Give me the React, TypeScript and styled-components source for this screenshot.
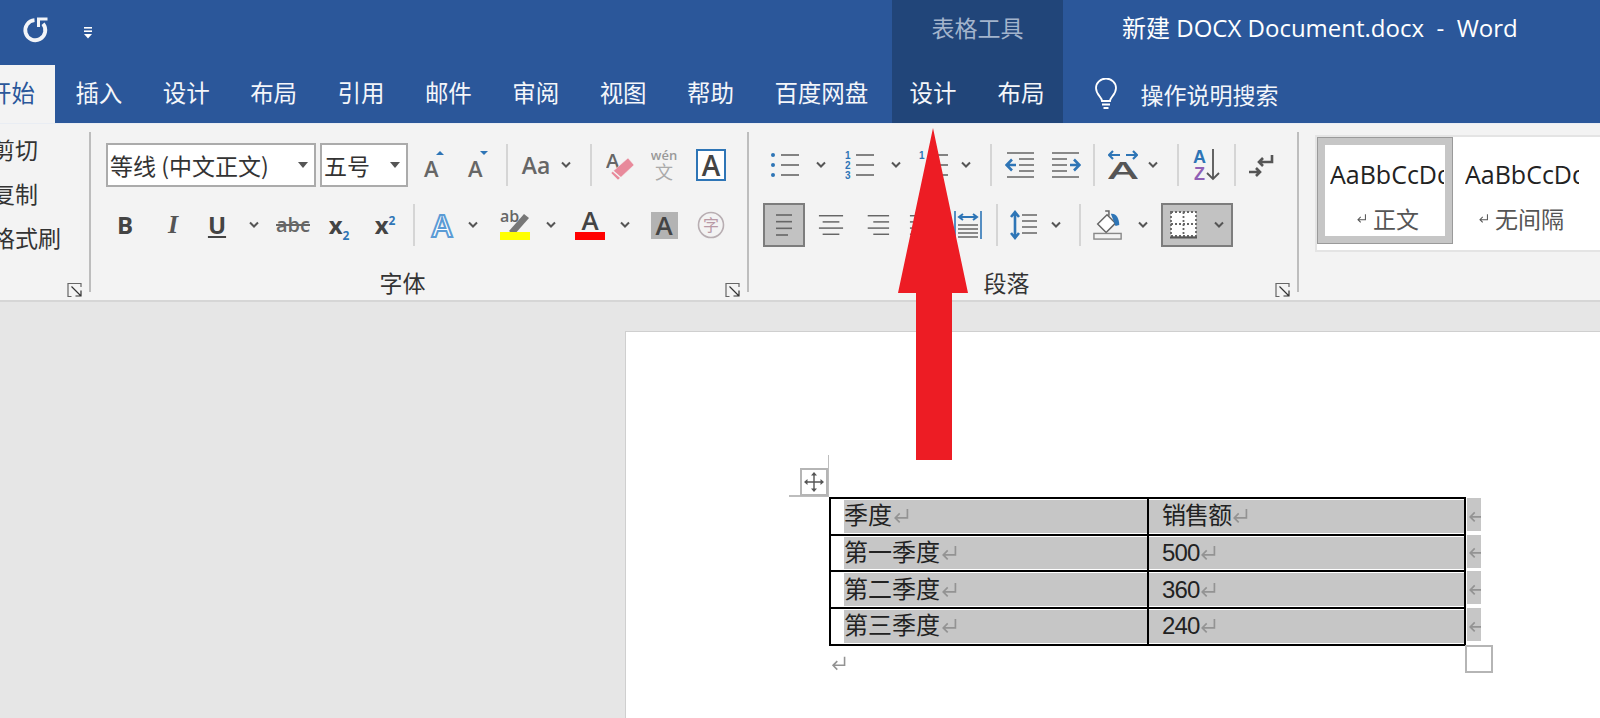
import styled, { createGlobalStyle } from 'styled-components';
import type { ReactNode } from 'react';

const CJK = '"Noto Sans CJK SC", "Open Sans", sans-serif';
const BLUE = '#2b579a';
const DARK = '#444';
const ICON_BLUE = '#2e75b6';

const GlobalStyle = createGlobalStyle`
  html, body {
    margin: 0;
    padding: 0;
    background: #e6e6e6;
    font-family: ${CJK};
  }
`;

const Window = styled.div`
  position: relative;
  width: 1600px;
  height: 718px;
  overflow: hidden;
  display: flex;
  flex-direction: column;
`;

const TitleBar = styled.div`
  height: 65px;
  flex: none;
  display: flex;
  background: ${BLUE};
  color: #fff;
`;

const QuickAccess = styled.div`
  width: 892px;
  display: flex;
  align-items: center;
  padding-left: 21px;
  gap: 34px;
  box-sizing: border-box;
`;

const UndoButton = styled.div`
  height: 28px;
  margin-bottom: 5px;
`;

const ContextTitle = styled.div`
  width: 171px;
  background: #214579;
  color: #a3b4cc;
  font-size: 23px;
  display: flex;
  align-items: center;
  justify-content: center;
  padding-bottom: 12px;
  box-sizing: border-box;
`;

const DocTitle = styled.div`
  margin-left: 59px;
  padding-bottom: 12px;
  font-size: 24px;
  font-family: "Open Sans", ${CJK};
  display: flex;
  align-items: center;
  white-space: pre;
`;

const TabBar = styled.div`
  height: 58px;
  flex: none;
  display: flex;
  background: ${BLUE};
  color: #f4f6fa;
`;

const Tab = styled.div<{ $active?: boolean }>`
  display: flex;
  align-items: center;
  padding: 0 20.2px 4px;
  font-size: 23.5px;
  white-space: nowrap;
  ${(p) => p.$active && `
    margin-left: -12px;
    padding-left: 0;
    background: #f3f3f3;
    color: ${BLUE};
  `}
`;

const ContextTabs = styled.div`
  display: flex;
  width: 171px;
  box-sizing: border-box;
  margin-left: 3px;
  padding-left: 18px;
  gap: 41px;
  background: #214579;
`;

const ContextTab = styled(Tab)`
  padding: 0 0 4px;
`;

const SearchHint = styled.div`
  display: flex;
  align-items: center;
  gap: 23px;
  margin-left: 31px;
  font-size: 23px;
  padding-bottom: 1px;
`;

const Ribbon = styled.div`
  height: 176px;
  flex: none;
  display: flex;
  background: #f3f3f3;
  border-top: 1px solid #e9edf3;
  border-bottom: 2px solid #d6d6d6;
  overflow: hidden;
`;

const Group = styled.div<{ $w: number }>`
  width: ${(p) => p.$w}px;
  flex: none;
  display: flex;
  flex-direction: column;
`;

const Divider = styled.div`
  width: 2px;
  flex: none;
  margin: 8px 0 8px;
  background: #bdbdbd;
`;

const ClipList = styled.div`
  margin: 3px 0 0 -8px;
  font-size: 23px;
  color: #333;
  line-height: 44px;
  white-space: nowrap;
`;

const Rows = styled.div<{ $left?: number }>`
  display: flex;
  flex-direction: column;
  gap: 16px;
  padding: 19px 0 0 ${(p) => p.$left ?? 0}px;
`;

const Row = styled.div`
  height: 44px;
  display: flex;
  align-items: center;
`;

const Footer = styled.div`
  margin-top: auto;
  height: 30px;
  margin-bottom: 5px;
  display: grid;
  grid-template-columns: 1fr auto 1fr;
  align-items: center;
  padding-right: 33px;
  position: relative;
  font-size: 23px;
  color: #333;
`;

const GroupLabel = styled.div`
  grid-column: 2;
`;

const Launcher = styled.div`
  position: absolute;
  right: 6px;
  top: 6px;
  width: 16px;
  height: 16px;
`;

const Select = styled.div<{ $w: number; $ml?: number }>`
  width: ${(p) => p.$w}px;
  height: 44px;
  margin-left: ${(p) => p.$ml ?? 0}px;
  box-sizing: border-box;
  border: 2px solid #ababab;
  background: #fff;
  display: flex;
  align-items: center;
  justify-content: space-between;
  padding: 0 6px 0 2px;
  font-size: 23px;
  color: #333;
  white-space: nowrap;
  &::after {
    content: '';
    border: 5px solid transparent;
    border-top: 6px solid #555;
    border-bottom: none;
  }
`;

const Tool = styled.div<{ $w: number; $ml: number }>`
  width: ${(p) => p.$w}px;
  margin-left: ${(p) => p.$ml}px;
  flex: none;
  display: flex;
  align-items: center;
  justify-content: center;
  color: ${DARK};
`;

const ToolSep = styled.div<{ $ml: number }>`
  width: 2px;
  height: 42px;
  flex: none;
  margin-left: ${(p) => p.$ml}px;
  background: #d5d5d5;
`;

const ActiveTool = styled.div<{ $w: number; $ml: number }>`
  width: ${(p) => p.$w}px;
  height: 44px;
  margin-left: ${(p) => p.$ml}px;
  flex: none;
  box-sizing: border-box;
  border: 2px solid #7d7d7d;
  background: #c2c2c2;
  display: flex;
  align-items: center;
  justify-content: center;
  gap: 16px;
`;

const Letter = styled.span<{ $size?: number; $italic?: boolean; $weight?: number; $color?: string }>`
  font-family: ${(p) => (p.$italic ? '"Liberation Serif"' : '"Open Sans"')}, sans-serif;
  font-size: ${(p) => p.$size ?? 24}px;
  font-weight: ${(p) => p.$weight ?? 400};
  font-style: ${(p) => (p.$italic ? 'italic' : 'normal')};
  color: ${(p) => p.$color ?? DARK};
  line-height: 1;
`;

const Gallery = styled.div`
  margin: 11px 0 0 16px;
  height: 113px;
  display: flex;
  background: #fff;
  flex: 1;
  border-top: 2px solid #e4e4e4;
  border-left: 2px solid #e4e4e4;
  border-bottom: 2px solid #e4e4e4;
`;

const StyleCell = styled.div<{ $selected?: boolean }>`
  width: 136px;
  height: 107px;
  flex: none;
  box-sizing: border-box;
  background: #fff;
  padding: 8px 0 0 ${(p) => (p.$selected ? 5 : 0)}px;
  border: ${(p) => (p.$selected ? '8px solid #c6c6c6' : 'none')};
  outline: ${(p) => (p.$selected ? '1px solid #9a9a9a' : 'none')};
  outline-offset: -1px;
  display: flex;
  flex-direction: column;
`;

const StyleSample = styled.div<{ $selected?: boolean }>`
  width: 114px;
  margin-left: ${(p) => (p.$selected ? 0 : 12)}px;
  margin-top: ${(p) => (p.$selected ? 1 : 9)}px;
  overflow: hidden;
  white-space: nowrap;
  font-family: "Open Sans", sans-serif;
  font-size: 25px;
  line-height: 40px;
  color: #222;
`;

const StyleName = styled.div`
  margin-top: 8px;
  display: flex;
  align-items: center;
  justify-content: center;
  gap: 6px;
  font-size: 23px;
  line-height: 32px;
  color: #555;
`;

const Canvas = styled.div`
  flex: 1;
  min-height: 0;
  padding: 29px 0 0 625px;
  background: #e6e6e6;
`;

const Page = styled.div`
  height: 100%;
  background: #fff;
  padding: 165px 0 0 203px;
  box-sizing: border-box;
  border-left: 1px solid #cfcfcf;
  border-top: 1px solid #cfcfcf;
`;

const TableWrap = styled.div`
  position: relative;
  width: 660px;
  display: flex;
`;

const SheetTable = styled.table`
  width: 635px;
  flex: none;
  border-collapse: collapse;
  table-layout: fixed;
  font-size: 24px;
  color: #222;
  td {
    height: 36.7px;
    padding: 0;
    border: 2px solid #000;
    box-sizing: border-box;
  }
`;

const Shade = styled.div<{ $inset?: boolean }>`
  height: 32.7px;
  margin: 1px 0 1px ${(p) => (p.$inset ? 13 : 0)}px;
  padding-left: ${(p) => (p.$inset ? 0 : 13)}px;
  background: #c6c6c6;
  display: flex;
  align-items: center;
  font-family: "Liberation Sans", ${CJK};
  letter-spacing: ${(p) => (p.$inset ? 0 : -0.9)}px;
  line-height: 32px;
`;

const RowEnds = styled.div`
  display: flex;
  flex-direction: column;
  padding-top: 1px;
  margin-left: 1px;
`;

const RowEnd = styled.div`
  width: 14px;
  height: 33px;
  margin-bottom: 3.7px;
  background: #c6c6c6;
  display: flex;
  align-items: center;
  overflow: hidden;
`;

const MoveHandle = styled.div`
  position: absolute;
  left: -29px;
  top: -29px;
  width: 28px;
  height: 28px;
  box-sizing: border-box;
  border: 2px solid #b5b5b5;
  background: #fff;
  display: flex;
  align-items: center;
  justify-content: center;
`;

const GuideV = styled.div`
  position: absolute;
  left: -1px;
  top: -42px;
  width: 1px;
  height: 42px;
  background: #bdbdbd;
`;

const GuideH = styled.div`
  position: absolute;
  left: -40px;
  top: -2px;
  width: 40px;
  height: 2px;
  background: #bdbdbd;
`;

const ResizeHandle = styled.div`
  position: absolute;
  left: 636px;
  top: 148px;
  width: 28px;
  height: 28px;
  box-sizing: border-box;
  border: 2px solid #b5b5b5;
  background: #fff;
`;

const AfterTable = styled.div`
  padding: 7px 0 0 1px;
`;

const Arrow = styled.svg`
  position: absolute;
  left: 898px;
  top: 128px;
`;

const Chevron = () => (
  <svg width="12" height="8" viewBox="0 0 12 8" fill="none" stroke="#555" strokeWidth="2">
    <path d="M2 1.5l4 4 4-4" />
  </svg>
);

const ReturnMark = ({ size = 18, color = '#939393' }: { size?: number; color?: string }) => (
  <svg width={size} height={size} viewBox="0 0 14 14" fill="none" stroke={color} strokeWidth="1.3" style={{ flex: 'none' }}>
    <path d="M12 1.5v7H2.5M6 5L2.5 8.5 6 12" />
  </svg>
);

const UndoIcon = () => (
  <svg width="28" height="28" viewBox="0 0 28 28" fill="none" stroke="#f2f4f8" strokeWidth="3.8">
    <path d="M13.5 4.2a10 10 0 1 0 8.5 3.6" />
    <path d="M26.5 3H17.5v8" strokeWidth="3" />
  </svg>
);

const CustomizeIcon = () => (
  <svg width="10" height="12" viewBox="0 0 10 12" fill="#fff">
    <rect x="1" y="0" width="8" height="1.6" />
    <rect x="1" y="3.4" width="8" height="1.6" />
    <path d="M1 7h8l-4 4.5z" />
  </svg>
);

const BulbIcon = () => (
  <svg width="24" height="32" viewBox="0 0 24 32" fill="none" stroke="#fff" strokeWidth="1.8">
    <path d="M8 23c0-4-6-6-6-13a10 9.5 0 0 1 20 0c0 7-6 9-6 13z" />
    <path d="M8 26.5h8M9.5 30h5" />
  </svg>
);

const LauncherIcon = () => (
  <svg width="16" height="16" viewBox="0 0 16 16" fill="none" stroke="#666" strokeWidth="1.2">
    <path d="M14.5 5V1.5h-13v13H5" transform="translate(-0.5 0)" />
    <path d="M4.5 4.5l9 9M14 8.5v5.5H8.5" stroke="#333" />
  </svg>
);

const TextLines = ({ xs }: { xs: [number, number][] }) => (
  <svg width="28" height="26" viewBox="0 0 28 26" stroke="#666" strokeWidth="1.6">
    {xs.map(([a, b], i) => (
      <line key={i} x1={a} x2={b} y1={3 + (i * 20) / (xs.length - 1)} y2={3 + (i * 20) / (xs.length - 1)} />
    ))}
  </svg>
);

const ListIcon = ({ marks }: { marks: string[] }) => (
  <svg width="30" height="30" viewBox="0 0 30 30" stroke="#666" strokeWidth="1.6">
    {[5, 15, 25].map((y, i) => (
      <g key={y}>
        <line x1="11" x2="29" y1={y} y2={y} />
        {marks[i] === '•' ? (
          <circle cx="3" cy={y} r="2" fill={ICON_BLUE} stroke="none" />
        ) : (
          <text x="0" y={y + 4} fontSize="10" fontWeight="700" fontFamily="Liberation Sans" fill={ICON_BLUE} stroke="none">
            {marks[i]}
          </text>
        )}
      </g>
    ))}
  </svg>
);

const IndentIcon = ({ flip }: { flip?: boolean }) => (
  <svg width="30" height="28" viewBox="0 0 30 28" fill="none" stroke="#666" strokeWidth="1.6" style={flip ? { transform: 'scaleX(-1)' } : undefined}>
    <path d="M2 2h27M14 8h15M14 14h15M14 20h15M2 26h27" />
    <path d="M11 14H2M7 8.5L1.5 14 7 19.5" stroke={ICON_BLUE} strokeWidth="2.6" />
  </svg>
);

const AsianLayoutIcon = () => (
  <svg width="30" height="30" viewBox="0 0 30 30" fill="none">
    <path d="M1 5h11M5 1L1 5l4 4M29 5H18M25 1l4 4-4 4" stroke={ICON_BLUE} strokeWidth="2.2" />
    <text x="0" y="29" textLength="30" lengthAdjust="spacingAndGlyphs" fontSize="23" fontWeight="600" fontFamily="Open Sans" fill="#555">A</text>
  </svg>
);

const SortIcon = () => (
  <svg width="28" height="34" viewBox="0 0 28 34" fill="none">
    <text x="0" y="15" fontSize="18" fontWeight="700" fontFamily="Liberation Sans" fill={ICON_BLUE}>A</text>
    <text x="1" y="32" fontSize="18" fontWeight="700" fontFamily="Liberation Sans" fill="#8f5fb5">Z</text>
    <path d="M20 1v30M14 25l6 6 6-6" stroke="#555" strokeWidth="1.8" />
  </svg>
);

const MarksIcon = () => (
  <svg width="26" height="24" viewBox="0 0 26 24" fill="none" stroke="#555" strokeWidth="2.6">
    <path d="M24 2v7H11M15 5l-4 4 4 4" />
    <path d="M1 19h11M8 15l4 4-4 4" />
  </svg>
);

const DistributedIcon = () => (
  <svg width="28" height="30" viewBox="0 0 28 30" fill="none" stroke="#666" strokeWidth="1.6">
    <path d="M1 1v28M27 1v28" stroke={ICON_BLUE} />
    <path d="M6 7h16M9 4L5 7l4 3M19 4l4 3-4 3" stroke={ICON_BLUE} strokeWidth="2" />
    <path d="M4 15h20M4 19h20M4 23h20M4 27h20" />
  </svg>
);

const LineSpacingIcon = () => (
  <svg width="28" height="32" viewBox="0 0 28 32" fill="none">
    <path d="M5 3v26M1 8l4-5 4 5M1 24l4 5 4-5" stroke={ICON_BLUE} strokeWidth="2.6" />
    <path d="M12 6h15M12 12h15M12 18h15M12 24h15" stroke="#666" strokeWidth="1.6" />
  </svg>
);

const ShadingIcon = () => (
  <svg width="32" height="34" viewBox="0 0 32 34" fill="none">
    <path d="M13 2h4v5" stroke="#666" strokeWidth="1.6" />
    <path d="M15 6L5 16l9 9 10-10z" fill="#fff" stroke="#666" strokeWidth="1.6" />
    <path d="M19 5c5-1 9 4 9 12l-4 1z" fill={ICON_BLUE} />
    <rect x="1" y="26" width="29" height="6" fill="#f3f3f3" stroke="#888" strokeWidth="1.5" />
  </svg>
);

const BordersIcon = () => (
  <svg width="27" height="28" viewBox="0 0 27 28" fill="none" stroke="#666" strokeWidth="1.8" strokeDasharray="2 2">
    <rect x="1" y="1" width="25" height="24" fill="#fff" />
    <path d="M13.5 1v24M1 13h25" />
    <path d="M0 26.5h27" stroke="#555" strokeWidth="2" strokeDasharray="none" />
  </svg>
);

const MoveIcon = () => (
  <svg width="20" height="20" viewBox="0 0 20 20" fill="#555" stroke="#555" strokeWidth="1.4">
    <path d="M10 2v16M2 10h16" fill="none" />
    <path d="M10 0l3 3.5H7zM10 20l-3-3.5h6zM0 10l3.5-3v6zM20 10l-3.5 3V7z" stroke="none" />
  </svg>
);

const GrowShrink = ({ up }: { up?: boolean }) => (
  <svg width="26" height="30" viewBox="0 0 26 30">
    <text x="3" y="27" fontSize="22" fontWeight="600" fontFamily="Open Sans" fill="#666">A</text>
    <path d={up ? 'M15 5l4-4 4 4z' : 'M15 1h8l-4 4z'} fill={ICON_BLUE} />
  </svg>
);

const ClearFormatIcon = () => (
  <svg width="30" height="32" viewBox="0 0 30 32">
    <text x="0" y="19" fontSize="20" fontFamily="Open Sans" fontWeight="600" fill="#666">A</text>
    <path d="M5 24L22 9l6 7L12 31z" fill="#e88a9b" stroke="#f3f3f3" strokeWidth="0.5" />
    <path d="M7 22l8 7" stroke="#f3f3f3" strokeWidth="1.5" />
  </svg>
);

const PhoneticIcon = () => (
  <svg width="26" height="32" viewBox="0 0 26 32">
    <text x="13" y="11" textAnchor="middle" fontSize="13" fontWeight="600" fontFamily="Open Sans" fill="#999">wén</text>
    <text x="13" y="30" textAnchor="middle" fontSize="18" fontFamily="Noto Sans CJK SC" fill="#aaa">文</text>
  </svg>
);

const BoxedA = styled.div`
  width: 30px;
  height: 32px;
  box-sizing: border-box;
  border: 2px solid ${ICON_BLUE};
  background: #fff;
  display: flex;
  align-items: center;
  justify-content: center;
`;

const TextEffectA = () => (
  <svg width="26" height="30" viewBox="0 0 26 30">
    <text x="13" y="27" textAnchor="middle" fontSize="31" fontFamily="Open Sans" fontWeight="600" fill="#fff" stroke="#5b9bd5" strokeWidth="2">A</text>
  </svg>
);

const HighlightIcon = () => (
  <svg width="30" height="32" viewBox="0 0 30 32">
    <text x="0" y="13" fontSize="16" fontWeight="600" fontFamily="Open Sans" fill="#666">ab</text>
    <path d="M9 22L24 5l5 4-15 17z" fill="#777" />
    <rect x="0" y="23" width="30" height="8" fill="#ffff00" />
  </svg>
);

const FontColorIcon = () => (
  <svg width="30" height="32" viewBox="0 0 30 32">
    <text x="15" y="21" textAnchor="middle" fontSize="26" fontWeight="600" fontFamily="Open Sans" fill={DARK}>A</text>
    <rect x="0" y="23" width="30" height="8" fill="#ff0000" />
  </svg>
);

const ShadedA = styled.div`
  width: 27px;
  height: 27px;
  background: #b3b3b3;
  display: flex;
  align-items: center;
  justify-content: center;
`;

const EnclosedIcon = () => (
  <svg width="28" height="28" viewBox="0 0 28 28">
    <circle cx="14" cy="14" r="12.5" fill="#f3f3f3" stroke="#b8aeb2" strokeWidth="1.6" />
    <text x="14" y="20" textAnchor="middle" fontSize="16" fontFamily="Noto Sans CJK SC" fill="#b99aa6">字</text>
  </svg>
);

const Sub = styled.sub`
  font-size: 12px;
  color: ${ICON_BLUE};
  line-height: 0;
`;

const Sup = styled.sup`
  font-size: 12px;
  color: ${ICON_BLUE};
  line-height: 0;
`;

const Struck = styled(Letter)`
  text-decoration: line-through;
`;

const Underlined = styled(Letter)`
  text-decoration: underline;
`;

const GroupFooter = ({ label, children }: { label?: string; children?: ReactNode }) => (
  <Footer>
    {label && <GroupLabel>{label}</GroupLabel>}
    {children}
    <Launcher>
      <LauncherIcon />
    </Launcher>
  </Footer>
);

const ribbonTabs = ['插入', '设计', '布局', '引用', '邮件', '审阅', '视图', '帮助', '百度网盘'];

const tableRows = [
  ['季度', '销售额'],
  ['第一季度', '500'],
  ['第二季度', '360'],
  ['第三季度', '240'],
];

const App = () => (
  <>
    <GlobalStyle />
    <Window>
      <TitleBar>
        <QuickAccess>
          <UndoButton><UndoIcon /></UndoButton>
          <CustomizeIcon />
        </QuickAccess>
        <ContextTitle>表格工具</ContextTitle>
        <DocTitle>新建 DOCX Document.docx  -  Word</DocTitle>
      </TitleBar>

      <TabBar>
        <Tab $active>开始</Tab>
        {ribbonTabs.map((t) => (
          <Tab key={t}>{t}</Tab>
        ))}
        <ContextTabs>
          <ContextTab>设计</ContextTab>
          <ContextTab>布局</ContextTab>
        </ContextTabs>
        <SearchHint>
          <BulbIcon />
          操作说明搜索
        </SearchHint>
      </TabBar>

      <Ribbon>
        <Group $w={89}>
          <ClipList>
            <div>剪切</div>
            <div>复制</div>
            <div>格式刷</div>
          </ClipList>
          <GroupFooter />
        </Group>
        <Divider />

        <Group $w={656}>
          <Rows $left={15}>
            <Row>
              <Select $w={210}>等线 (中文正文)</Select>
              <Select $w={88} $ml={4}>五号</Select>
              <Tool $w={26} $ml={13}><GrowShrink up /></Tool>
              <Tool $w={26} $ml={18}><GrowShrink /></Tool>
              <ToolSep $ml={15} />
              <Tool $w={28} $ml={14}><Letter $size={23} $weight={600} $color="#666">Aa</Letter></Tool>
              <Tool $w={12} $ml={10}><Chevron /></Tool>
              <ToolSep $ml={18} />
              <Tool $w={30} $ml={14}><ClearFormatIcon /></Tool>
              <Tool $w={26} $ml={15}><PhoneticIcon /></Tool>
              <Tool $w={30} $ml={19}><BoxedA><Letter $size={28} $weight={600}>A</Letter></BoxedA></Tool>
            </Row>
            <Row>
              <Tool $w={22} $ml={8}><Letter $weight={700}>B</Letter></Tool>
              <Tool $w={18} $ml={28}><Letter $weight={700} $italic $size={26} $color="#555">I</Letter></Tool>
              <Tool $w={24} $ml={23}><Underlined $weight={700}>U</Underlined></Tool>
              <Tool $w={12} $ml={19}><Chevron /></Tool>
              <Tool $w={34} $ml={16}><Struck $size={20} $weight={600} $color="#666">abc</Struck></Tool>
              <Tool $w={32} $ml={13}><Letter $weight={700}>x<Sub>2</Sub></Letter></Tool>
              <Tool $w={32} $ml={14}><Letter $weight={700}>x<Sup>2</Sup></Letter></Tool>
              <ToolSep $ml={12} />
              <Tool $w={26} $ml={14}><TextEffectA /></Tool>
              <Tool $w={12} $ml={12}><Chevron /></Tool>
              <Tool $w={30} $ml={21}><HighlightIcon /></Tool>
              <Tool $w={12} $ml={15}><Chevron /></Tool>
              <Tool $w={30} $ml={18}><FontColorIcon /></Tool>
              <Tool $w={12} $ml={14}><Chevron /></Tool>
              <Tool $w={28} $ml={19}><ShadedA><Letter $size={26} $weight={600}>A</Letter></ShadedA></Tool>
              <Tool $w={28} $ml={19}><EnclosedIcon /></Tool>
            </Row>
          </Rows>
          <GroupFooter label="字体" />
        </Group>
        <Divider />

        <Group $w={548}>
          <Rows>
            <Row>
              <Tool $w={30} $ml={21}><ListIcon marks={['•', '•', '•']} /></Tool>
              <Tool $w={12} $ml={15}><Chevron /></Tool>
              <Tool $w={30} $ml={18}><ListIcon marks={['1', '2', '3']} /></Tool>
              <Tool $w={12} $ml={15}><Chevron /></Tool>
              <Tool $w={30} $ml={17}><ListIcon marks={['1', '', '']} /></Tool>
              <Tool $w={12} $ml={11}><Chevron /></Tool>
              <ToolSep $ml={18} />
              <Tool $w={30} $ml={13}><IndentIcon /></Tool>
              <Tool $w={30} $ml={16}><IndentIcon flip /></Tool>
              <ToolSep $ml={12} />
              <Tool $w={30} $ml={13}><AsianLayoutIcon /></Tool>
              <Tool $w={12} $ml={9}><Chevron /></Tool>
              <ToolSep $ml={18} />
              <Tool $w={28} $ml={14}><SortIcon /></Tool>
              <ToolSep $ml={13} />
              <Tool $w={26} $ml={12}><MarksIcon /></Tool>
            </Row>
            <Row>
              <ActiveTool $w={42} $ml={14}><TextLines xs={[[6, 22], [6, 22], [6, 22], [6, 18]]} /></ActiveTool>
              <Tool $w={26} $ml={13}><TextLines xs={[[1, 27], [5, 23], [1, 27], [5, 23]]} /></Tool>
              <Tool $w={26} $ml={20}><TextLines xs={[[4, 27], [10, 27], [4, 27], [10, 27]]} /></Tool>
              <Tool $w={26} $ml={19}><TextLines xs={[[1, 27], [1, 27], [1, 27], [1, 27]]} /></Tool>
              <Tool $w={28} $ml={19}><DistributedIcon /></Tool>
              <ToolSep $ml={14} />
              <Tool $w={28} $ml={12}><LineSpacingIcon /></Tool>
              <Tool $w={12} $ml={12}><Chevron /></Tool>
              <ToolSep $ml={17} />
              <Tool $w={30} $ml={12}><ShadingIcon /></Tool>
              <Tool $w={12} $ml={14}><Chevron /></Tool>
              <ActiveTool $w={72} $ml={12}><BordersIcon /><Chevron /></ActiveTool>
            </Row>
          </Rows>
          <GroupFooter label="段落" />
        </Group>
        <Divider />

        <Gallery>
          <StyleCell $selected>
            <StyleSample $selected>AaBbCcDd</StyleSample>
            <StyleName><ReturnMark size={11} color="#555" />正文</StyleName>
          </StyleCell>
          <StyleCell>
            <StyleSample>AaBbCcDd</StyleSample>
            <StyleName><ReturnMark size={11} color="#555" />无间隔</StyleName>
          </StyleCell>
        </Gallery>
      </Ribbon>

      <Canvas>
        <Page>
          <TableWrap>
            <SheetTable>
              <colgroup>
                <col width="318" />
                <col width="317" />
              </colgroup>
              <tbody>
                {tableRows.map(([quarter, amount]) => (
                  <tr key={quarter}>
                    <td>
                      <Shade $inset>{quarter}<ReturnMark /></Shade>
                    </td>
                    <td>
                      <Shade>{amount}<ReturnMark /></Shade>
                    </td>
                  </tr>
                ))}
              </tbody>
            </SheetTable>
            <RowEnds>
              {tableRows.map(([quarter]) => (
                <RowEnd key={quarter}><ReturnMark /></RowEnd>
              ))}
            </RowEnds>
            <GuideV />
            <GuideH />
            <MoveHandle><MoveIcon /></MoveHandle>
            <ResizeHandle />
          </TableWrap>
          <AfterTable><ReturnMark size={17} /></AfterTable>
        </Page>
      </Canvas>

      {/* callout pointing at the table design tab */}
      <Arrow width="70" height="332" viewBox="0 0 70 332">
        <polygon points="35,0 70,165 54,165 54,332 18,332 18,165 0,165" fill="#ed1c24" />
      </Arrow>
    </Window>
  </>
);

export default App;
